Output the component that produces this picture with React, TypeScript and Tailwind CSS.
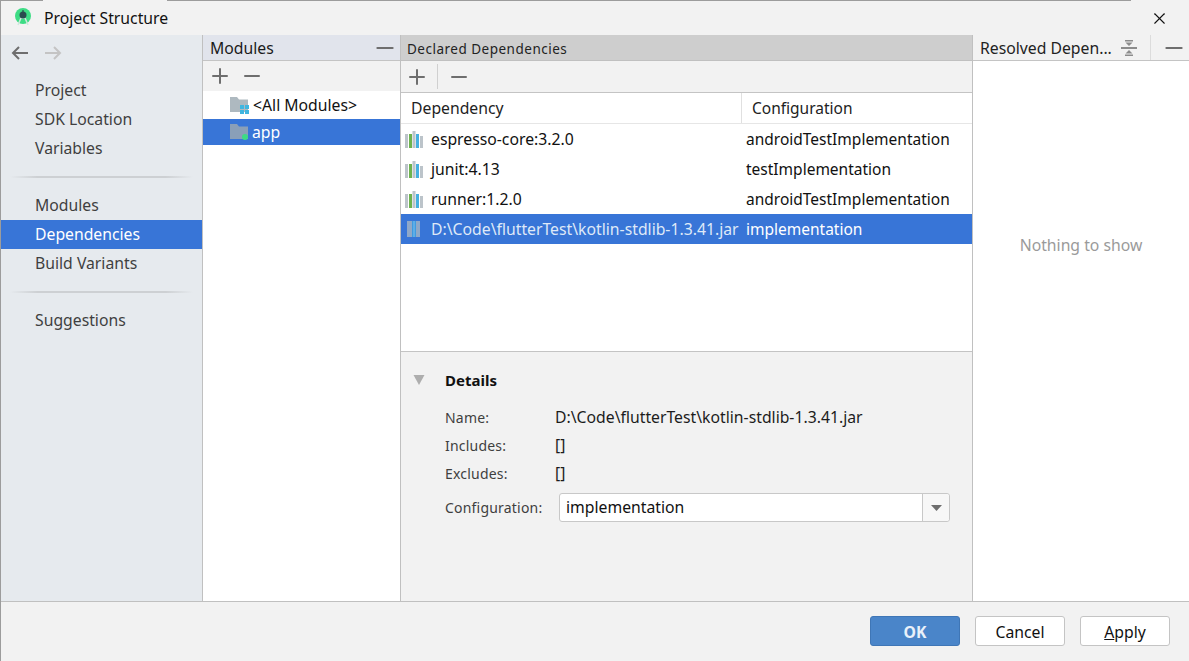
import { Minus, Plus, X } from "lucide-react"

const font = { fontFamily: '"Noto Sans", "Open Sans", sans-serif' }

function LibIcon({ selected }: { selected?: boolean }) {
  if (selected) {
    return (
      <svg width="18" height="18" viewBox="0 0 18 18" className="shrink-0">
        <rect x="2" y="1" width="13" height="16" fill="#8fa8c8" />
        <rect x="7" y="1" width="4" height="16" fill="#3f9ae0" />
        <path d="M8 2h2M8 4h2M8 6h2M8 8h2M8 10h2M8 12h2M8 14h2M8 16h2" stroke="#7cc0ee" strokeWidth="1" />
      </svg>
    )
  }
  return (
    <svg width="18" height="18" viewBox="0 0 18 18" className="shrink-0">
      <rect x="0" y="4" width="3" height="14" fill="#bcc4ca" />
      <rect x="4" y="4" width="3" height="14" fill="#6db34f" />
      <rect x="7.5" y="1" width="3" height="17" fill="#bcc4ca" />
      <rect x="11" y="4" width="3" height="14" fill="#45b0e0" />
      <rect x="15" y="6" width="3" height="12" fill="#bcc4ca" />
    </svg>
  )
}

function FolderIcon({ fill, children }: { fill: string; children?: React.ReactNode }) {
  return (
    <svg width="20" height="18" viewBox="0 0 20 18" className="shrink-0">
      <path d="M0 1h7l2 2.5h9V16H0z" fill={fill} />
      {children}
    </svg>
  )
}

function SideItem({ label, active }: { label: string; active?: boolean }) {
  return (
    <div className={`h-[29px] pl-[34px] flex items-center text-[15.75px] ${active ? "bg-[#3875d7] text-white" : "text-[#3f3f3f]"}`}>
      {label}
    </div>
  )
}

function SideDivider() {
  return <div className="mx-[9px] my-[13px] h-[2px] bg-[linear-gradient(90deg,transparent,#cdd0d3_15%,#cdd0d3_85%,transparent)]" />
}

const rows = [
  { name: "espresso-core:3.2.0", config: "androidTestImplementation" },
  { name: "junit:4.13", config: "testImplementation" },
  { name: "runner:1.2.0", config: "androidTestImplementation" },
]

function DetailRow({ label, value }: { label: string; value: string }) {
  return (
    <div className="flex items-center h-[28px]">
      <div className="w-[110px] pb-[2px] text-[14px] text-[#3f3f3f] tracking-[0.2px]">{label}</div>
      <div className="pb-[1px] text-[15.75px] text-[#1c1c1c]">{value}</div>
    </div>
  )
}

export default function App() {
  return (
    <div style={font} className="w-[1189px] h-[661px] overflow-hidden bg-[#f2f2f2] flex flex-col border-l border-[#9c9c9c] text-black">
      <div className="flex h-px shrink-0">
        <div className="w-[42px] bg-[#9c9c9c]" />
        <div className="w-[124px] bg-[#f2f2f2]" />
        <div className="w-[964px] bg-[#9c9c9c]" />
      </div>

      {/* title bar */}
      <div className="h-[34px] shrink-0 flex items-center pl-[13px] pr-[20px]">
        <svg width="18" height="18" viewBox="0 0 18 18" className="shrink-0 mt-[-3px]">
          <circle cx="9" cy="8" r="8" fill="#3ddc84" />
          <path d="M4 17l3-7h4l3 7" fill="none" stroke="#cfe8dc" strokeWidth="1.5" />
          <circle cx="9" cy="7" r="3.5" fill="#2b4a4f" />
          <rect x="8.4" y="2" width="1.2" height="3" fill="#2b4a4f" />
        </svg>
        <div className="ml-[12px] pt-[2px] text-[15.75px] text-[#111]">Project Structure</div>
        <X size={19} strokeWidth={1.4} className="ml-auto text-[#111]" />
      </div>

      <div className="flex-1 flex min-h-0">
        {/* sidebar */}
        <div className="w-[201px] shrink-0 bg-[#e6eaee] flex flex-col">
          <div className="h-[35px] flex items-center pl-[10px] gap-[15px] text-[#6e6e6e]">
            <svg width="18" height="14" viewBox="0 0 18 14">
              <path d="M17 7H2M8 1L2 7l6 6" fill="none" stroke="#6e6e6e" strokeWidth="2" />
            </svg>
            <svg width="18" height="14" viewBox="0 0 18 14">
              <path d="M1 7h15M10 1l6 6-6 6" fill="none" stroke="#c4c4c4" strokeWidth="2" />
            </svg>
          </div>
          <div className="h-[6px]" />
          <SideItem label="Project" />
          <SideItem label="SDK Location" />
          <SideItem label="Variables" />
          <SideDivider />
          <SideItem label="Modules" />
          <SideItem label="Dependencies" active />
          <SideItem label="Build Variants" />
          <SideDivider />
          <SideItem label="Suggestions" />
        </div>

        {/* modules */}
        <div className="w-[198px] shrink-0 border-l border-[#c0c0c0] flex flex-col bg-white">
          <div className="h-[26px] shrink-0 bg-[#e1e4ec] border-b border-[#c4c4c4] flex items-center pl-[7px] pr-[2px] text-[15.75px] text-[#1a1a1a]">
            <span className="pt-[2px]">Modules</span>
            <Minus size={26} strokeWidth={2} className="ml-auto text-[#6e6e6e]" />
          </div>
          <div className="h-[30px] shrink-0 bg-[#f2f2f2] flex items-center pl-[5px] gap-[8px] text-[#6e6e6e]">
            <Plus size={24} strokeWidth={2} />
            <Minus size={24} strokeWidth={2} />
          </div>
          <div className="h-[28px] flex items-center pl-[27px] text-[15.75px] text-[#111]">
            <FolderIcon fill="#aeb9c0">
              <rect x="10" y="9" width="4" height="4" fill="#40b6e0" />
              <rect x="15" y="9" width="4" height="4" fill="#40b6e0" />
              <rect x="10" y="14" width="4" height="4" fill="#40b6e0" />
              <rect x="15" y="14" width="4" height="4" fill="#40b6e0" />
            </FolderIcon>
            <span className="ml-[3px] pt-[2px]">&lt;All Modules&gt;</span>
          </div>
          <div className="h-[26px] bg-[#3875d7] flex items-center pl-[27px] text-[15.75px] text-white">
            <FolderIcon fill="#8a9fb8">
              <circle cx="15" cy="14" r="3" fill="#3ddc84" />
            </FolderIcon>
            <span className="ml-[2px] pt-[2px]">app</span>
          </div>
        </div>

        {/* declared dependencies */}
        <div className="w-[572px] shrink-0 border-l border-[#c0c0c0] flex flex-col">
          <div className="h-[26px] shrink-0 bg-[#cecece] border-b border-[#c0c0c0] flex items-center pt-[3px] pl-[6px] text-[13.5px] tracking-[0.5px] text-[#222]">
            Declared Dependencies
          </div>
          <div className="h-[32px] shrink-0 bg-[#f2f2f2] border-b border-[#c4c4c4] flex items-center pl-[4px] text-[#6e6e6e]">
            <Plus size={24} strokeWidth={2} />
            <div className="w-px h-[25px] bg-[#d0d0d0] ml-[8px] mr-[9px]" />
            <Minus size={24} strokeWidth={2} />
          </div>
          <div className="h-[259px] shrink-0 bg-white border-b border-[#c4c4c4] flex flex-col">
            <div className="h-[31px] shrink-0 flex items-center border-b border-[#e6e6e6] text-[15.75px] text-[#222]">
              <div className="w-[341px] h-full pl-[10px] pt-[2px] flex items-center border-r border-[#e0e0e0]">Dependency</div>
              <div className="pl-[10px] pt-[2px] text-[15.5px]">Configuration</div>
            </div>
            {rows.map((r) => (
              <div key={r.name} className="h-[30px] shrink-0 flex items-center text-[15.75px] text-[#111]">
                <div className="w-[341px] pl-[4px] flex items-center gap-[8px]">
                  <LibIcon />
                  <span className="pt-[2px]">{r.name}</span>
                </div>
                <div className="pl-[4px] pt-[2px] text-[15.5px]">{r.config}</div>
              </div>
            ))}
            <div className="h-[30px] shrink-0 flex items-center text-[15.75px] text-white bg-[#3875d7]">
              <div className="w-[341px] pl-[4px] flex items-center gap-[8px] whitespace-nowrap overflow-hidden">
                <LibIcon selected />
                <span className="pt-[2px] text-[#dfe9f8]">D:\Code\flutterTest\kotlin-stdlib-1.3.41.jar</span>
              </div>
              <div className="pl-[4px] pt-[2px] text-[15.5px]">implementation</div>
            </div>
          </div>
          <div className="flex-1 bg-[#f2f2f2] pl-[12px] pt-[15px]">
            <div className="flex items-center h-[26px]">
              <svg width="12" height="10" viewBox="0 0 12 10" className="shrink-0">
                <path d="M0.5 0h11L6 10z" fill="#aeaeae" />
              </svg>
              <div className="ml-[20px] text-[15px] font-bold text-[#111]">Details</div>
            </div>
            <div className="ml-[32px] mt-[11px]">
              <DetailRow label="Name:" value="D:\Code\flutterTest\kotlin-stdlib-1.3.41.jar" />
              <DetailRow label="Includes:" value="[]" />
              <DetailRow label="Excludes:" value="[]" />
              <div className="flex items-center h-[29px] mt-[5px]">
                <div className="w-[114px] pb-[1px] text-[14px] text-[#3f3f3f] tracking-[0.2px]">Configuration:</div>
                <div className="w-[391px] h-[29px] flex bg-white border border-[#c8c8c8] rounded-[3px]">
                  <div className="flex-1 flex items-center pl-[6px] text-[15.75px] text-[#111] border-r border-[#c8c8c8]">implementation</div>
                  <div className="w-[26px] flex items-center justify-center bg-[#f7f7f7] rounded-r-[3px]">
                    <svg width="11" height="6" viewBox="0 0 11 6">
                      <path d="M0 0h11L5.5 6z" fill="#6e6e6e" />
                    </svg>
                  </div>
                </div>
              </div>
            </div>
          </div>
        </div>

        {/* resolved */}
        <div className="flex-1 border-l border-[#c0c0c0] flex flex-col bg-white">
          <div className="h-[26px] shrink-0 bg-[#f2f2f2] border-b border-[#c4c4c4] flex items-center pl-[7px] text-[15.75px] text-[#222] whitespace-nowrap">
            <span className="w-[139px] shrink-0 pt-[2px]">Resolved Depen...</span>
            <svg width="16" height="16" viewBox="0 0 16 16" className="ml-[2px] shrink-0">
              <path d="M4 0h8v1.5H4zM4.5 2.5h7L8 6zM0 7h16v2H0zM8 10l3.5 3.5h-7zM4 14.5h8V16H4z" fill="#8c8c8c" />
            </svg>
            <div className="w-px h-[25px] bg-[#dcdcdc] ml-[13px]" />
            <Minus size={26} strokeWidth={2} className="ml-[10px] shrink-0 text-[#6e6e6e]" />
          </div>
          <div className="flex-1 flex items-center justify-center pb-[171px] text-[15.75px] text-[#9a9a9a]">Nothing to show</div>
        </div>
      </div>

      {/* footer */}
      <div className="h-[60px] shrink-0 border-t border-[#c0c0c0] flex items-start pt-[14px] pl-[869px] text-[15.75px]">
        <button className="w-[90px] h-[30px] pt-[3px] rounded-[3px] bg-[#4a85c9] border border-[#3f76b6] text-[#e9f1fa] font-bold">OK</button>
        <button className="w-[90px] h-[30px] pt-[3px] ml-[15px] rounded-[3px] bg-white border border-[#c4c4c4] text-[#111]">Cancel</button>
        <button className="w-[90px] h-[30px] pt-[3px] ml-[15px] rounded-[3px] bg-white border border-[#c4c4c4] text-[#111]"><span className="underline">A</span>pply</button>
      </div>
    </div>
  )
}
